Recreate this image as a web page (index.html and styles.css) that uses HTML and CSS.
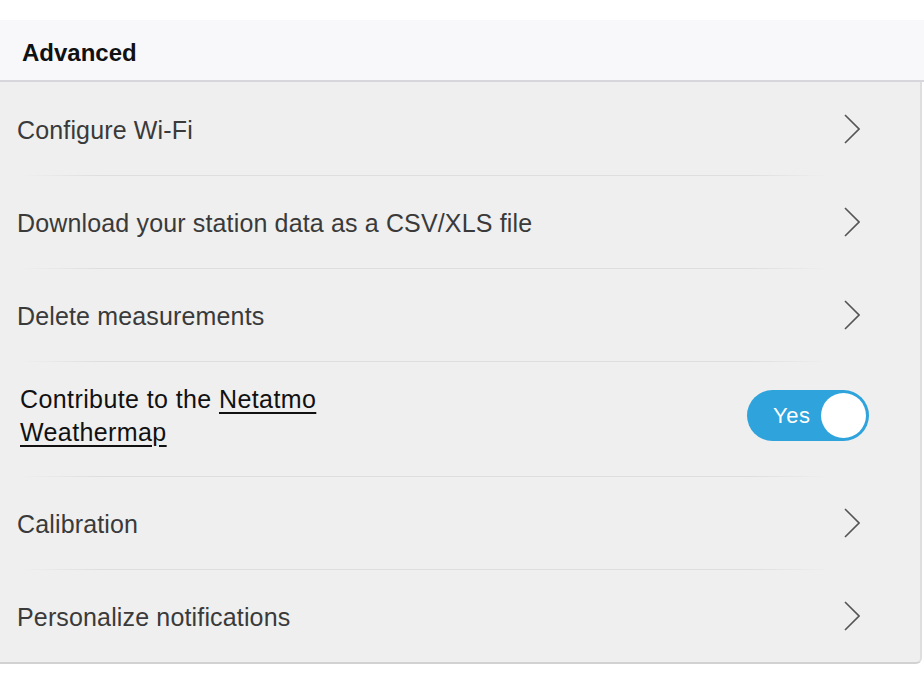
FILE: index.html
```html
<!DOCTYPE html>
<html lang="en">
<head>
    <meta charset="UTF-8">
    <meta name="viewport" content="width=device-width, initial-scale=1.0">
    <title>Advanced settings</title>
    <link rel="stylesheet" href="styles.css">
</head>
<body>

    <div class="section-title">Advanced</div>

    <div class="panel">
        <div class="row">
            <span class="label">Configure Wi-Fi</span>
            <svg class="chevron" width="16" height="30" viewBox="0 0 16 30"><path d="M1 1 L15 15 L1 29"/></svg>
        </div>
        <div class="row">
            <span class="label">Download your station data as a CSV/XLS file</span>
            <svg class="chevron" width="16" height="30" viewBox="0 0 16 30"><path d="M1 1 L15 15 L1 29"/></svg>
        </div>
        <div class="row">
            <span class="label">Delete measurements</span>
            <svg class="chevron" width="16" height="30" viewBox="0 0 16 30"><path d="M1 1 L15 15 L1 29"/></svg>
        </div>
        <div class="row row-tall">
            <span class="label label-dark">Contribute to the <a href="#">Netatmo<br>Weathermap</a></span>
            <div class="toggle">
                <span class="toggle-text">Yes</span>
                <span class="knob"></span>
            </div>
        </div>
        <div class="row">
            <span class="label">Calibration</span>
            <svg class="chevron" width="16" height="30" viewBox="0 0 16 30"><path d="M1 1 L15 15 L1 29"/></svg>
        </div>
        <div class="row">
            <span class="label">Personalize notifications</span>
            <svg class="chevron" width="16" height="30" viewBox="0 0 16 30"><path d="M1 1 L15 15 L1 29"/></svg>
        </div>
    </div>

</body>
</html>
```

FILE: styles.css
```css
body {
    margin: 0;
    font-family: "Liberation Sans", Arial, sans-serif;
    background-color: #fff;
    color: #333;
}
.section-title {
    margin-top: 20px;
    height: 62px;
    padding: 5px 0 0 22px;
    box-sizing: border-box;
    display: flex;
    align-items: center;
    background-color: #f8f8fb;
    border-bottom: 2px solid #d6d6dc;
    font-size: 24px;
    font-weight: bold;
    color: #111;
}
.panel {
    width: 920px;
    background-color: #efefef;
    border-right: 2px solid #dedede;
    border-bottom: 2px solid #d2d2d2;
    border-bottom-right-radius: 6px;
}
.row {
    height: 93px;
    display: flex;
    align-items: center;
    justify-content: space-between;
    padding: 0 60px 0 17px;
    position: relative;
}
.row + .row::before {
    content: "";
    position: absolute;
    top: 0;
    left: 20px;
    right: 90px;
    height: 1px;
    background: linear-gradient(to right, rgba(220,220,220,0), #dedede 10%, #dedede 90%, rgba(220,220,220,0));
}
.row-tall {
    height: 115px;
    padding-left: 20px;
    padding-right: 51px;
}
.label {
    font-size: 25px;
    letter-spacing: 0.15px;
    color: #3a3a3a;
    padding-top: 3px;
}
.label-dark {
    color: #111;
    line-height: 33px;
    letter-spacing: 0.4px;
    margin-top: -5px;
    padding-top: 0;
}
.label-dark a {
    color: #111;
    text-decoration: underline;
    text-underline-offset: 4px;
}
.chevron {
    fill: none;
    stroke: #555;
    stroke-width: 1.6;
}
.toggle {
    width: 122px;
    height: 51px;
    box-sizing: border-box;
    border-radius: 26px;
    background-color: #2ea3dc;
    display: flex;
    align-items: center;
    justify-content: space-between;
    padding: 0 3px 0 26px;
    margin-top: -6px;
}
.toggle-text {
    color: #fff;
    font-size: 22px;
    letter-spacing: 0.5px;
}
.knob {
    width: 45px;
    height: 45px;
    border-radius: 50%;
    background-color: #fff;
}
```
